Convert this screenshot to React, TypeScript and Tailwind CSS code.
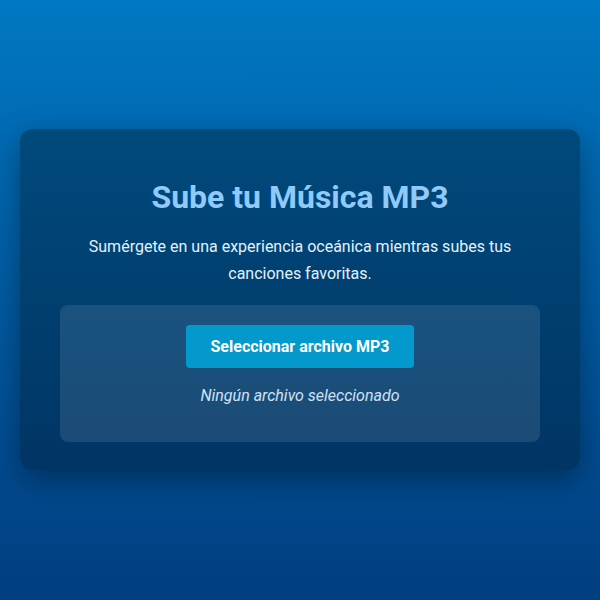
export default function App() {
  return (
    <div
      className="min-h-screen w-full flex items-center justify-center bg-linear-to-b from-[#0078c3] to-[#003e80] px-5"
      style={{ fontFamily: "Roboto, 'Liberation Sans', sans-serif" }}
    >
      <div className="w-[560px] rounded-xl bg-linear-to-b from-[#004a7c] to-[#003565] shadow-[0_10px_30px_rgba(0,0,0,0.35)] px-10 pt-12 pb-[28px] mb-[2px] text-center">
        <h1 className="text-[32px] leading-[40px] font-bold text-[#90caf9] mb-4">
          Sube tu Música MP3
        </h1>
        <p className="text-base leading-[27px] text-[#e3f2fd] mb-[18px]">
          Sumérgete en una experiencia oceánica mientras subes tus canciones favoritas.
        </p>
        <div className="rounded-lg bg-white/10 pt-5 pb-[34px] flex flex-col items-center">
          <button className="rounded-[4px] bg-[#0399cc] px-[25px] py-2.5 text-base leading-[23px] font-bold text-white">
            Seleccionar archivo MP3
          </button>
          <p className="mt-4 text-base leading-6 italic text-[#cfe3f7]">
            Ningún archivo seleccionado
          </p>
        </div>
      </div>
    </div>
  );
}
